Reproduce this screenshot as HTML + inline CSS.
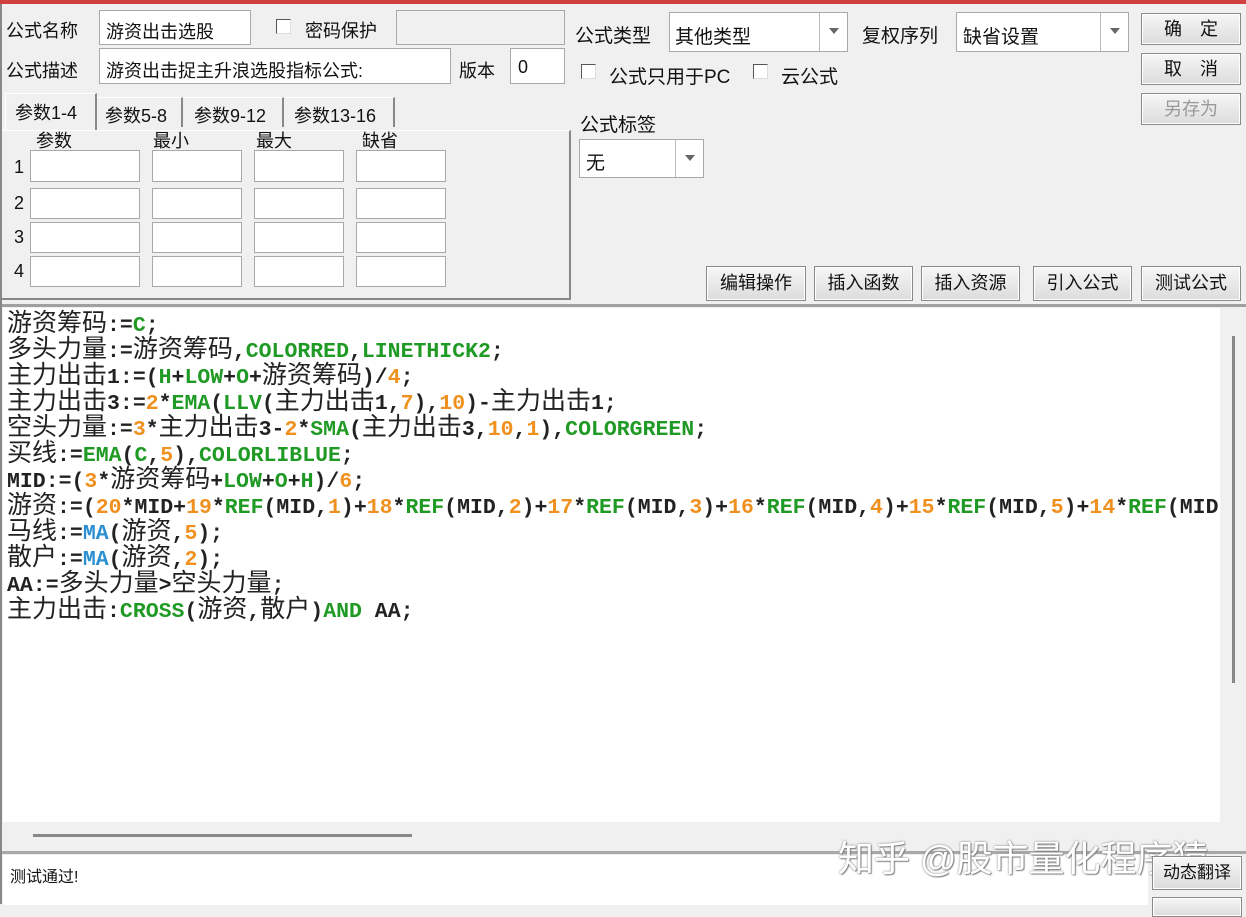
<!DOCTYPE html>
<html><head><meta charset="utf-8"><style>
*{margin:0;padding:0;box-sizing:border-box}
body{width:1246px;height:905px;background:#f0f0f0;position:relative;overflow:hidden;font-family:"Liberation Sans","Noto Sans CJK SC",sans-serif;font-size:18px;color:#111}
.a{position:absolute;white-space:nowrap}
.in{position:absolute;background:#fff;border:1px solid #a8a8a8}
.btn{position:absolute;border:1px solid #8a8a8a;background:linear-gradient(#f6f6f6,#dcdcdc);text-align:center;font-size:18px;box-shadow:inset 0 0 0 1px #fff}
.cb{position:absolute;width:15px;height:15px;border:1px solid #555;border-right-color:#ddd;border-bottom-color:#ddd;background:#fff}
.dd{position:absolute;right:0;top:0;bottom:0;width:28px;border-left:1px solid #bbb}
.dd:after{content:"";position:absolute;left:9px;top:15px;border:5px solid transparent;border-top:6px solid #666}
#code{position:absolute;left:3px;top:308px;width:1217px;height:514px;background:#fff;overflow:hidden;padding:2px 0 0 4px}
.l{height:26px;line-height:26px;white-space:nowrap;font-size:25px;font-family:"Liberation Sans","Noto Sans CJK SC",sans-serif;color:#222}
.l b,.l i,.l u,.l s{font-family:"Liberation Mono",monospace;font-size:21.5px;font-weight:bold;font-style:normal;text-decoration:none}
.l b{color:#222}.l i{color:#1f9a24}.l u{color:#f0901e}.l s{color:#2a8fd0}
</style></head><body>
<div class="a" style="left:0;top:0;width:1246px;height:4px;background:#d04040"></div>
<div class="a" style="left:0;top:4px;width:2px;height:900px;background:#888"></div>

<div class="a" style="left:6px;top:17px">公式名称</div>
<div class="in" style="left:99px;top:10px;width:152px;height:35px"><span class="a" style="left:6px;top:7px">游资出击选股</span></div>
<div class="cb" style="left:276px;top:19px"></div>
<div class="a" style="left:305px;top:17px">密码保护</div>
<div class="in" style="left:396px;top:10px;width:169px;height:35px;background:#f0f0f0"></div>
<div class="a" style="left:6px;top:57px">公式描述</div>
<div class="in" style="left:99px;top:48px;width:352px;height:36px"><span class="a" style="left:6px;top:8px">游资出击捉主升浪选股指标公式:</span></div>
<div class="a" style="left:459px;top:57px">版本</div>
<div class="in" style="left:510px;top:48px;width:55px;height:36px"><span class="a" style="left:7px;top:8px">0</span></div>

<div class="a" style="left:5px;top:93px;width:92px;height:38px;border:1px solid #fff;border-right:2px solid #888;border-bottom:none;background:#f0f0f0"></div>
<div class="a" style="left:15px;top:99px">参数1-4</div>
<div class="a" style="left:97px;top:97px;width:86px;height:30px;border-right:2px solid #888;border-top:1px solid #fff"></div>
<div class="a" style="left:105px;top:102px">参数5-8</div>
<div class="a" style="left:183px;top:97px;width:101px;height:30px;border-right:2px solid #888;border-top:1px solid #fff"></div>
<div class="a" style="left:194px;top:102px">参数9-12</div>
<div class="a" style="left:284px;top:97px;width:111px;height:30px;border-right:2px solid #888;border-top:1px solid #fff"></div>
<div class="a" style="left:294px;top:102px">参数13-16</div>
<div class="a" style="left:2px;top:130px;width:569px;height:170px;border-right:2px solid #888;border-bottom:2px solid #888;border-top:1px solid #fff"></div>
<div class="a" style="left:36px;top:127px">参数</div>
<div class="a" style="left:153px;top:127px">最小</div>
<div class="a" style="left:256px;top:127px">最大</div>
<div class="a" style="left:362px;top:127px">缺省</div>

<div class="a" style="left:14px;top:157px">1</div><div class="a" style="left:14px;top:193px">2</div><div class="a" style="left:14px;top:227px">3</div><div class="a" style="left:14px;top:261px">4</div>
<div class="in" style="left:30px;top:150px;width:110px;height:32px"></div><div class="in" style="left:152px;top:150px;width:90px;height:32px"></div><div class="in" style="left:254px;top:150px;width:90px;height:32px"></div><div class="in" style="left:356px;top:150px;width:90px;height:32px"></div>
<div class="in" style="left:30px;top:188px;width:110px;height:31px"></div><div class="in" style="left:152px;top:188px;width:90px;height:31px"></div><div class="in" style="left:254px;top:188px;width:90px;height:31px"></div><div class="in" style="left:356px;top:188px;width:90px;height:31px"></div>
<div class="in" style="left:30px;top:222px;width:110px;height:31px"></div><div class="in" style="left:152px;top:222px;width:90px;height:31px"></div><div class="in" style="left:254px;top:222px;width:90px;height:31px"></div><div class="in" style="left:356px;top:222px;width:90px;height:31px"></div>
<div class="in" style="left:30px;top:256px;width:110px;height:31px"></div><div class="in" style="left:152px;top:256px;width:90px;height:31px"></div><div class="in" style="left:254px;top:256px;width:90px;height:31px"></div><div class="in" style="left:356px;top:256px;width:90px;height:31px"></div>

<div class="a" style="left:575px;top:21px;font-size:19px">公式类型</div>
<div class="in" style="left:669px;top:12px;width:179px;height:40px"><span class="a" style="left:5px;top:9px;font-size:19px">其他类型</span><div class="dd"></div></div>
<div class="a" style="left:862px;top:21px;font-size:19px">复权序列</div>
<div class="in" style="left:956px;top:12px;width:173px;height:40px"><span class="a" style="left:6px;top:9px;font-size:19px">缺省设置</span><div class="dd"></div></div>
<div class="cb" style="left:581px;top:64px"></div>
<div class="a" style="left:609px;top:62px;font-size:19px">公式只用于PC</div>
<div class="cb" style="left:753px;top:64px"></div>
<div class="a" style="left:781px;top:62px;font-size:19px">云公式</div>
<div class="a" style="left:580px;top:110px;font-size:19px">公式标签</div>
<div class="in" style="left:579px;top:139px;width:125px;height:39px"><span class="a" style="left:6px;top:8px;font-size:19px">无</span><div class="dd"></div></div>

<div class="btn" style="left:1141px;top:13px;width:100px;height:32px;line-height:30px">确　定</div>
<div class="btn" style="left:1141px;top:53px;width:100px;height:32px;line-height:30px">取　消</div>
<div class="btn" style="left:1141px;top:93px;width:100px;height:32px;line-height:30px;color:#999">另存为</div>

<div class="btn" style="left:706px;top:266px;width:100px;height:35px;line-height:33px">编辑操作</div>
<div class="btn" style="left:814px;top:266px;width:99px;height:35px;line-height:33px">插入函数</div>
<div class="btn" style="left:921px;top:266px;width:99px;height:35px;line-height:33px">插入资源</div>
<div class="btn" style="left:1033px;top:266px;width:99px;height:35px;line-height:33px">引入公式</div>
<div class="btn" style="left:1141px;top:266px;width:100px;height:35px;line-height:33px">测试公式</div>

<div class="a" style="left:2px;top:304px;width:1244px;height:3px;background:#a0a0a0"></div>

<div id="code">
<div class="l">游资筹码<b>:=</b><i>C</i><b>;</b></div>
<div class="l">多头力量<b>:=</b>游资筹码<b>,</b><i>COLORRED</i><b>,</b><i>LINETHICK2</i><b>;</b></div>
<div class="l">主力出击<b>1:=(</b><i>H</i><b>+</b><i>LOW</i><b>+</b><i>O</i><b>+</b>游资筹码<b>)/</b><u>4</u><b>;</b></div>
<div class="l">主力出击<b>3:=</b><u>2</u><b>*</b><i>EMA</i><b>(</b><i>LLV</i><b>(</b>主力出击<b>1,</b><u>7</u><b>),</b><u>10</u><b>)-</b>主力出击<b>1;</b></div>
<div class="l">空头力量<b>:=</b><u>3</u><b>*</b>主力出击<b>3-</b><u>2</u><b>*</b><i>SMA</i><b>(</b>主力出击<b>3,</b><u>10</u><b>,</b><u>1</u><b>),</b><i>COLORGREEN</i><b>;</b></div>
<div class="l">买线<b>:=</b><i>EMA</i><b>(</b><i>C</i><b>,</b><u>5</u><b>),</b><i>COLORLIBLUE</i><b>;</b></div>
<div class="l"><b>MID:=(</b><u>3</u><b>*</b>游资筹码<b>+</b><i>LOW</i><b>+</b><i>O</i><b>+</b><i>H</i><b>)/</b><u>6</u><b>;</b></div>
<div class="l">游资<b>:=(</b><u>20</u><b>*MID+</b><u>19</u><b>*</b><i>REF</i><b>(MID,</b><u>1</u><b>)+</b><u>18</u><b>*</b><i>REF</i><b>(MID,</b><u>2</u><b>)+</b><u>17</u><b>*</b><i>REF</i><b>(MID,</b><u>3</u><b>)+</b><u>16</u><b>*</b><i>REF</i><b>(MID,</b><u>4</u><b>)+</b><u>15</u><b>*</b><i>REF</i><b>(MID,</b><u>5</u><b>)+</b><u>14</u><b>*</b><i>REF</i><b>(MID</b></div>
<div class="l">马线<b>:=</b><s>MA</s><b>(</b>游资<b>,</b><u>5</u><b>);</b></div>
<div class="l">散户<b>:=</b><s>MA</s><b>(</b>游资<b>,</b><u>2</u><b>);</b></div>
<div class="l"><b>AA:=</b>多头力量<b>&gt;</b>空头力量<b>;</b></div>
<div class="l">主力出击<b>:</b><i>CROSS</i><b>(</b>游资<b>,</b>散户<b>)</b><i>AND</i><b> AA;</b></div>
</div>
<div class="a" style="left:1220px;top:308px;width:26px;height:514px;background:#f0f0f0"></div>
<div class="a" style="left:1232px;top:336px;width:3px;height:347px;background:#888"></div>
<div class="a" style="left:33px;top:834px;width:379px;height:3px;background:#888"></div>
<div class="a" style="left:2px;top:851px;width:1244px;height:3px;background:#a8a8a8"></div>
<div class="a" style="left:3px;top:855px;width:1145px;height:50px;background:#fff"></div>
<div class="a" style="left:10px;top:863px;font-size:16px">测试通过!</div>
<div class="a" style="left:838px;top:830px;font-size:36px;color:#fff;text-shadow:0 0 2px #777,1px 1px 1px #888">知乎 @股市量化程序猿</div>
<div class="btn" style="left:1152px;top:856px;width:90px;height:34px;line-height:32px;font-size:17px">动态翻译</div>
<div class="btn" style="left:1152px;top:897px;width:90px;height:20px"></div>
</body></html>
